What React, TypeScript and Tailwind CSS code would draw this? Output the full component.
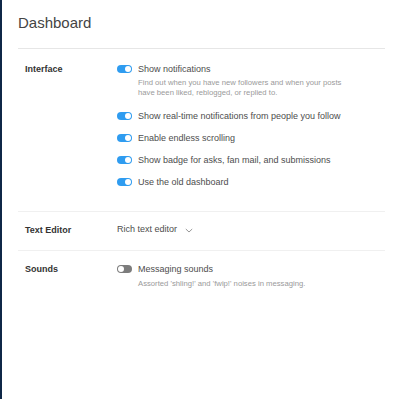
import React from "react";

function Toggle({ on }: { on: boolean }) {
  return (
    <span
      className={`relative inline-block w-[15px] h-[8px] rounded-full shrink-0 ${on ? "bg-[#2f9cf0]" : "bg-[#7c7c7c]"}`}
    >
      <span
        className={`absolute top-[1px] w-[6px] h-[6px] rounded-full bg-white ${on ? "right-[1px]" : "left-[1px]"}`}
      />
    </span>
  );
}

function Row({ on, text, className = "" }: { on: boolean; text: string; className?: string }) {
  return (
    <div className={`flex items-center h-[12px] ${className}`}>
      <Toggle on={on} />
      <span className="ml-[6px] text-[9px] leading-[12px] text-[#4d4d4d] whitespace-nowrap">{text}</span>
    </div>
  );
}

export default function App() {
  const font = { fontFamily: '"Liberation Sans", Arial, sans-serif' };
  return (
    <div className="flex w-[400px] h-[399px] bg-white" style={font}>
      <div className="w-[2px] h-full bg-[#0f2747] shrink-0" />
      <div className="flex-1 pl-[16px] pr-[15px]">
        <div className="h-[49px] border-b border-[#e6e6e6] pt-[13px]">
          <h1 className="text-[15px] leading-[20px] text-[#444] font-normal">Dashboard</h1>
        </div>

        <div className="flex pl-[7px] pt-[14px] pb-[23px] border-b border-[#f0f0f0]">
          <div className="w-[92px] text-[9px] leading-[12px] font-bold text-[#333]">Interface</div>
          <div className="flex flex-col">
            <Row on text="Show notifications" />
            <div className="ml-[21px] mt-[3px] text-[7.7px] leading-[10px] text-[#9a9a9a] w-[230px]">
              Find out when you have new followers and when your posts
              <br />
              have been liked, reblogged, or replied to.
            </div>
            <Row on text="Show real-time notifications from people you follow" className="mt-[12px]" />
            <Row on text="Enable endless scrolling" className="mt-[10px]" />
            <Row on text="Show badge for asks, fan mail, and submissions" className="mt-[10px]" />
            <Row on text="Use the old dashboard" className="mt-[10px]" />
          </div>
        </div>

        <div className="flex pl-[7px] pt-[12px] pb-[14px] border-b border-[#f0f0f0]">
          <div className="w-[92px] text-[9px] leading-[12px] font-bold text-[#333]">Text Editor</div>
          <div className="flex items-center h-[12px] text-[9px] text-[#4d4d4d]">
            <span>Rich text editor</span>
            <svg className="ml-[8px]" width="8" height="5" viewBox="0 0 8 5" fill="none">
              <path d="M0.8 1L4 4L7.2 1" stroke="#8a8a8a" strokeWidth="0.9" />
            </svg>
          </div>
        </div>

        <div className="flex pl-[7px] pt-[12px]">
          <div className="w-[92px] text-[9px] leading-[12px] font-bold text-[#333]">Sounds</div>
          <div className="flex flex-col">
            <Row on={false} text="Messaging sounds" />
            <div className="ml-[21px] mt-[4px] text-[7.7px] leading-[10px] text-[#9a9a9a] whitespace-nowrap">
              Assorted 'shling!' and 'fwip!' noises in messaging.
            </div>
          </div>
        </div>
      </div>
    </div>
  );
}
